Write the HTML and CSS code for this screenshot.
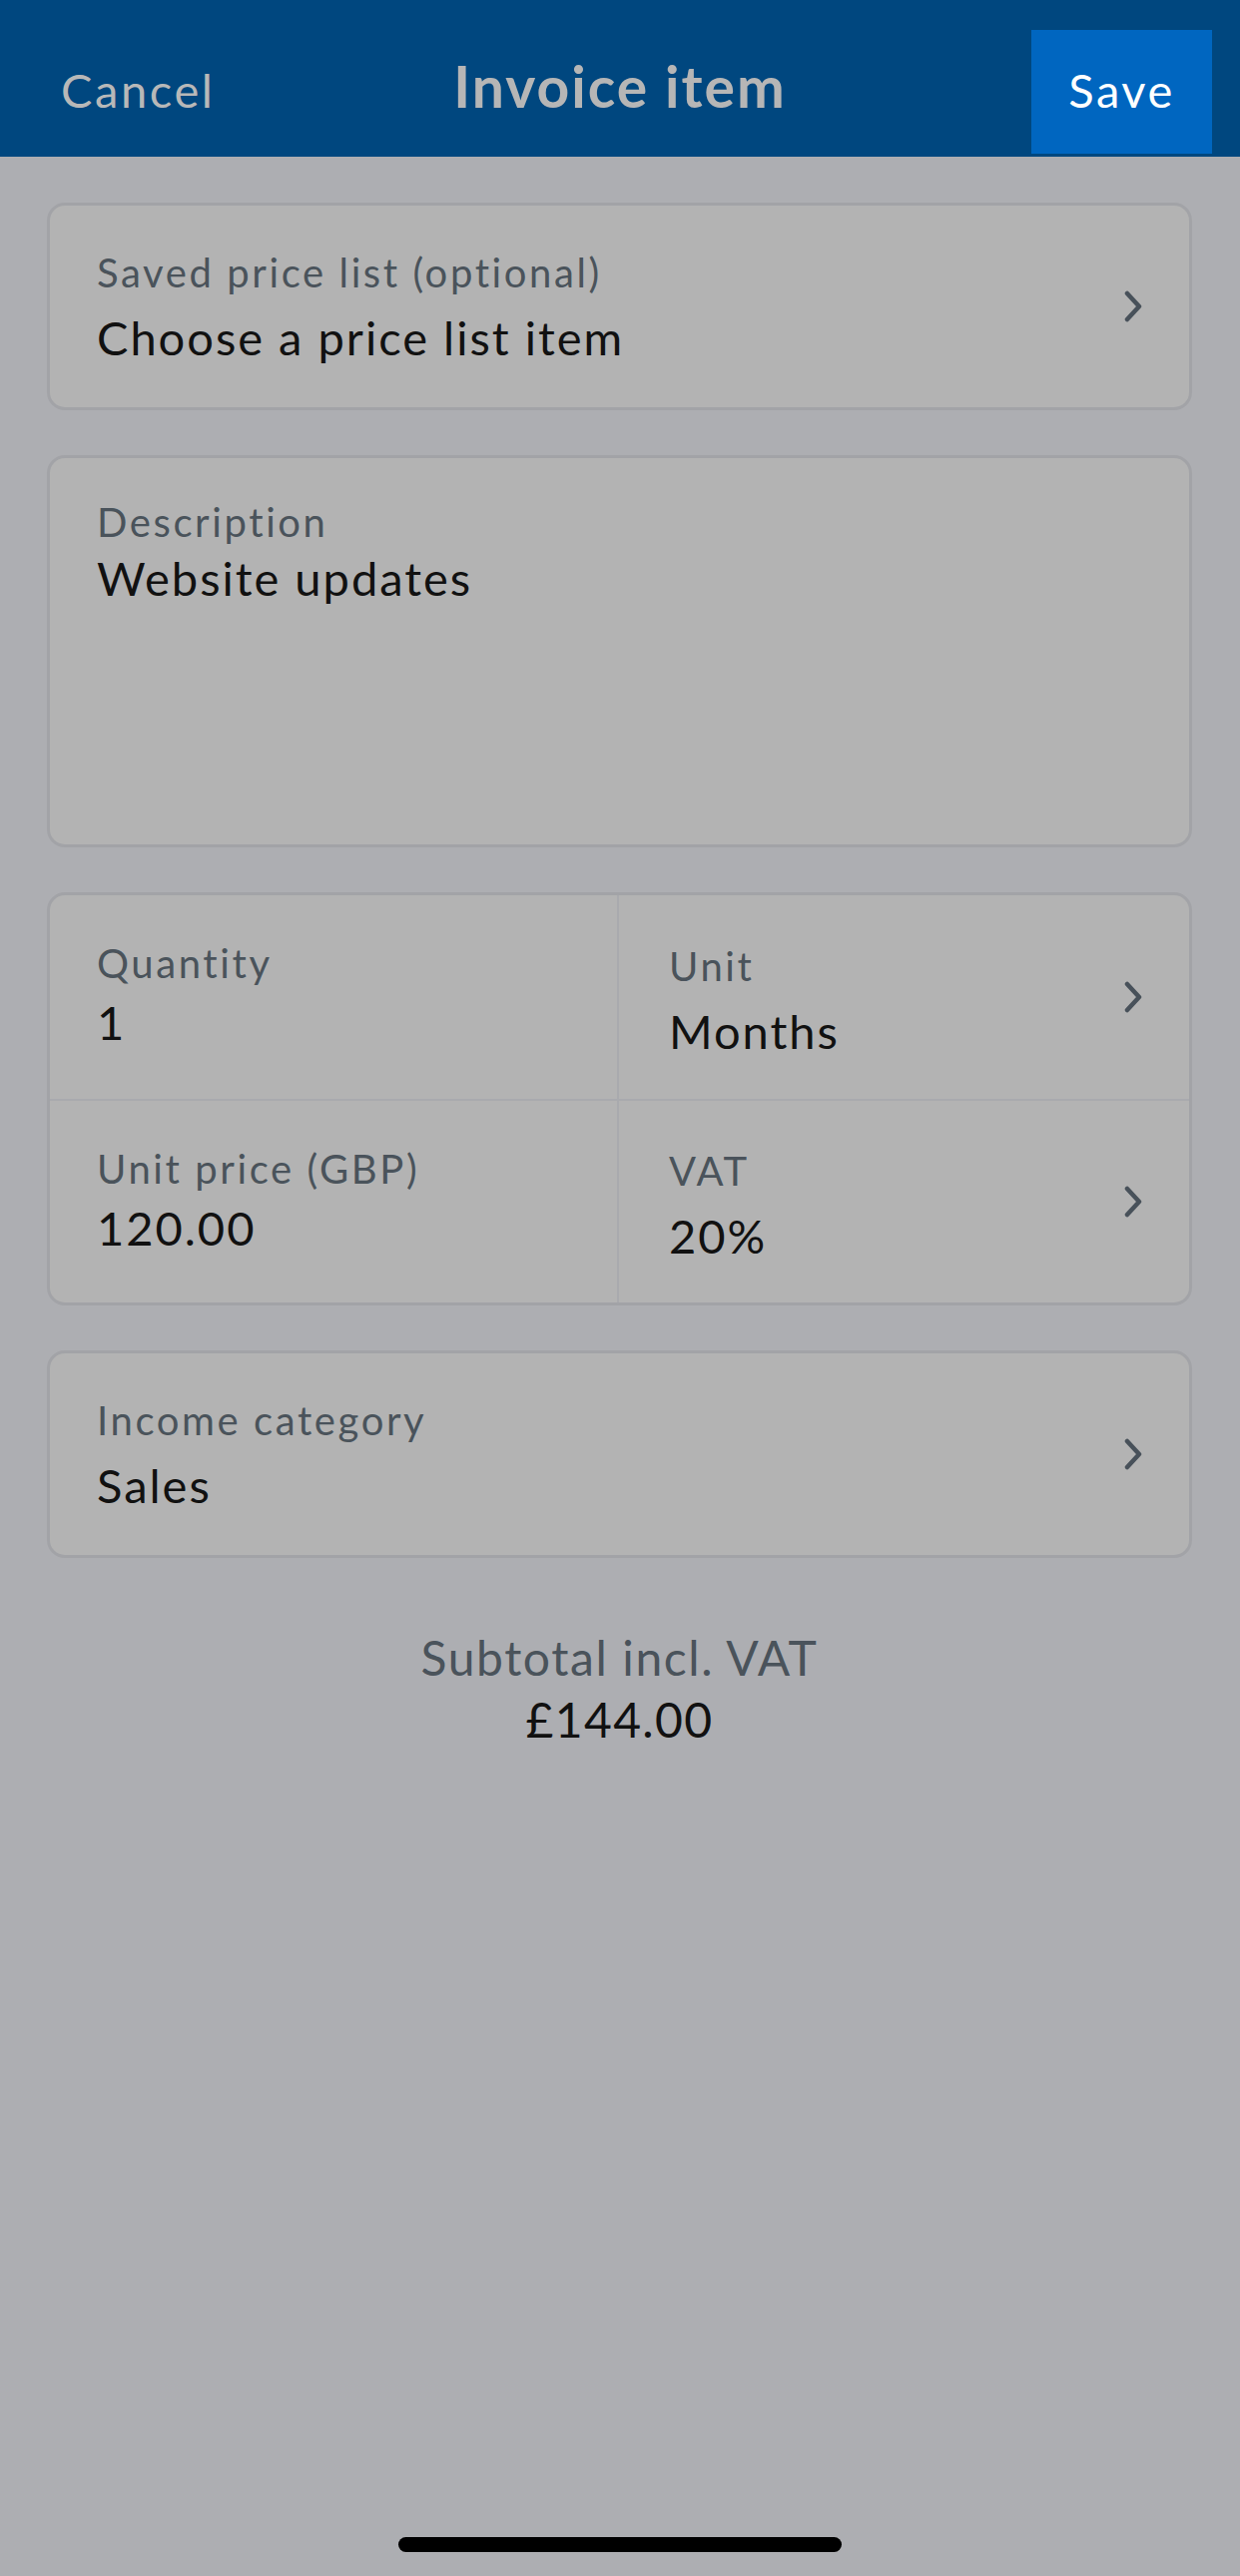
FILE: index.html
```html
<!DOCTYPE html>
<html lang="en">
  <head>
    <meta charset="UTF-8" />
    <meta name="viewport" content="width=device-width, initial-scale=1.0" />
    <title>Invoice item</title>
    <link rel="stylesheet" href="styles.css">
  </head>
  <body>
    <header class="nav">
      <span class="nav-cancel">Cancel</span>
      <h1 class="nav-title">Invoice item</h1>
      <button class="nav-save">Save</button>
    </header>

    <main class="form">
      <div class="card picker">
        <div class="field">
          <div class="label">Saved price list (optional)</div>
          <div class="value">Choose a price list item</div>
        </div>
        <svg class="chevron" viewBox="0 0 20 32"><polyline points="4,3 16,16 4,29" /></svg>
      </div>

      <div class="card description">
        <div class="label">Description</div>
        <div class="value">Website updates</div>
      </div>

      <div class="card grid">
        <div class="cell input">
          <div class="label">Quantity</div>
          <div class="value">1</div>
        </div>
        <div class="cell picker">
          <div class="field">
            <div class="label">Unit</div>
            <div class="value">Months</div>
          </div>
          <svg class="chevron" viewBox="0 0 20 32"><polyline points="4,3 16,16 4,29" /></svg>
        </div>
        <div class="cell input">
          <div class="label">Unit price (GBP)</div>
          <div class="value">120.00</div>
        </div>
        <div class="cell picker">
          <div class="field">
            <div class="label">VAT</div>
            <div class="value">20%</div>
          </div>
          <svg class="chevron" viewBox="0 0 20 32"><polyline points="4,3 16,16 4,29" /></svg>
        </div>
      </div>

      <div class="card picker">
        <div class="field">
          <div class="label">Income category</div>
          <div class="value">Sales</div>
        </div>
        <svg class="chevron" viewBox="0 0 20 32"><polyline points="4,3 16,16 4,29" /></svg>
      </div>

      <div class="subtotal">
        <div class="subtotal-label">Subtotal incl. VAT</div>
        <div class="subtotal-value">£144.00</div>
      </div>
    </main>

    <div class="home-bar"></div>
  </body>
</html>
```

FILE: styles.css
```css
* {
  box-sizing: border-box;
}
body {
  margin: 0;
  height: 2581px;
  display: flex;
  flex-direction: column;
  font-family: Lato, "Open Sans", sans-serif;
  background-color: #adaeb2;
}

/* top bar */
.nav {
  height: 157px;
  display: grid;
  grid-template-columns: 1fr auto 1fr;
  align-items: baseline;
  padding: 30px 28px 3px 28px;
  background: #00477f;
}
.nav-cancel {
  padding-left: 33px;
  font-size: 47px;
  letter-spacing: 2.6px;
  color: #b8b8b8;
}
.nav-title {
  margin: 0;
  font-size: 57px;
  font-weight: 700;
  letter-spacing: 2px;
  color: #b6b6b6;
}
.nav-save {
  justify-self: end;
  width: 181px;
  height: 124px;
  padding: 0 0 4px;
  border: none;
  background: #0066c0;
  font-family: inherit;
  font-size: 47px;
  letter-spacing: 2.5px;
  color: white;
}

/* form */
.form {
  display: flex;
  flex-direction: column;
  gap: 45px;
  padding: 46px 48px 0 47px;
}
.card {
  background: #b3b3b3;
  border: 3px solid #a2a3a7;
  border-radius: 18px;
}
.label {
  font-size: 40px;
  line-height: 48px;
  letter-spacing: 2.6px;
  color: #4a535b;
}
.value {
  font-size: 47px;
  line-height: 56px;
  letter-spacing: 2px;
  color: #111;
}
.picker {
  display: flex;
  align-items: center;
  padding: 0 46px 0 47px;
}
.card.picker {
  height: 208px;
}
.picker .field {
  flex: 1;
}
.picker .value {
  margin-top: 13px;
}
.chevron {
  width: 20px;
  height: 32px;
  fill: none;
  stroke: #48515a;
  stroke-width: 4.5;
  stroke-linecap: round;
  stroke-linejoin: round;
}
.description {
  height: 393px;
  padding: 40px 47px;
}
.description .value {
  margin-top: 4px;
}

/* quantity / unit / price / vat */
.grid {
  display: grid;
  grid-template-columns: 570px 1fr;
  grid-template-rows: 206px 202px;
  overflow: hidden;
}
.cell:nth-child(odd) {
  border-right: 2px solid #a9aaae;
}
.cell:nth-child(-n+2) {
  border-bottom: 2px solid #a9aaae;
}
.cell.input {
  padding: 44px 47px 0;
}
.cell.input .value {
  margin-top: 7px;
}
.cell.picker {
  padding: 0 46px 0 50px;
}
.cell.picker .field {
  padding-top: 6px;
}

.subtotal {
  margin-top: 26px;
  text-align: center;
}
.subtotal-label {
  font-size: 48px;
  line-height: 58px;
  letter-spacing: 1.6px;
  color: #4a535b;
}
.subtotal-value {
  margin-top: 4px;
  font-size: 48px;
  line-height: 58px;
  letter-spacing: 1.4px;
  color: #111;
}

.home-bar {
  width: 444px;
  height: 15px;
  margin: auto auto 24px;
  border-radius: 8px;
  background: black;
}
```
